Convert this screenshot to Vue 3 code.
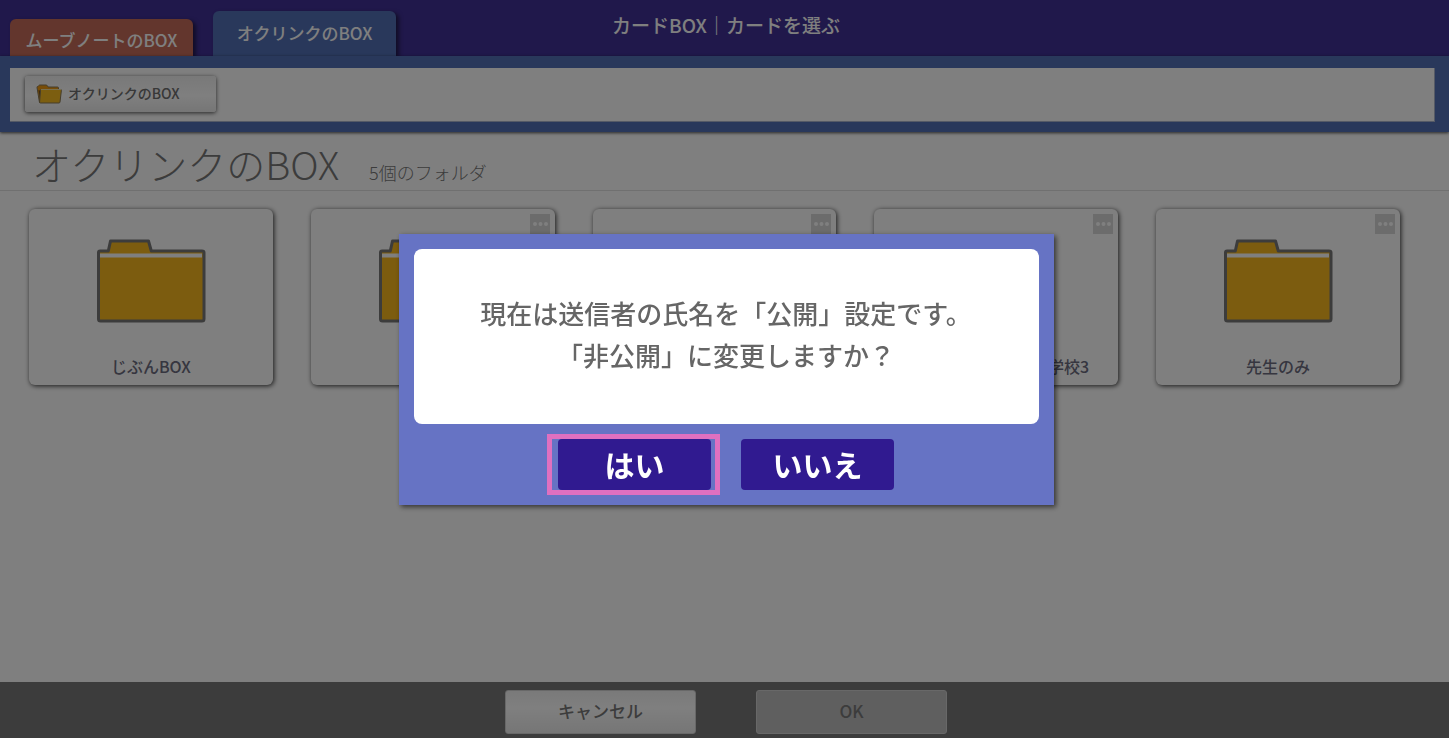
<script setup>
const folders = [
  { id: 1, name: 'じぶんBOX', menu: false },
  { id: 2, name: '', menu: true },
  { id: 3, name: '', menu: true },
  { id: 4, name: '学校3', menu: true, end: true },
  { id: 5, name: '先生のみ', menu: true },
]
</script>

<template>
  <div class="app">
    <header class="topbar">
      <nav class="tabs">
        <button type="button" class="tab move">ムーブノートのBOX</button>
        <button type="button" class="tab oku">オクリンクのBOX</button>
      </nav>
      <h2 class="title">カードBOX｜カードを選ぶ</h2>
    </header>

    <div class="pathbar">
      <div class="path">
        <button type="button" class="crumb">
          <svg width="26" height="20" viewBox="0 0 26 20" aria-hidden="true">
            <path d="M3.5 18.5 1 3.5Q.8 2.5 1.8 2.5L2.500 1.800Q3 1 4 1h6q1 0 1.500 1l.5 1h9.500q1 0 1 1v2L6 7z" fill="#f09a10" stroke="#8a7a58" />
            <path d="M2.500 6 4 16l1-9z" fill="#775018" />
            <path d="M5.200 5.500h19.500q.8 0 .7.900L24 18q-.1 1-1 1H4.500q-1 0-.9-1L4.500 6.200q0-.7.7-.7z" fill="#f8bc20" stroke="#8a7a58" />
            <path d="M5 5.500h20" stroke="#f0e0a0" />
          </svg>
          <span>オクリンクのBOX</span>
        </button>
      </div>
    </div>

    <div class="heading">
      <h1>オクリンクのBOX</h1>
      <p>5個のフォルダ</p>
    </div>

    <main class="grid">
      <article v-for="f in folders" :key="f.id" class="card">
        <button v-if="f.menu" type="button" class="more" aria-label="メニュー">
          <svg width="20" height="20" viewBox="0 0 20 20" aria-hidden="true">
            <circle cx="5" cy="10" r="2" /><circle cx="10.500" cy="10" r="2" /><circle cx="16" cy="10" r="2" />
          </svg>
        </button>
        <svg class="folder" width="110" height="84" viewBox="0 0 110 84" aria-hidden="true">
          <path d="M2.500 12.500q0-1 1-1h8.500l2.500-10h38l2.500 10h51.500q1 0 1 1v68q0 1.500-1.500 1.500h-102q-1.500 0-1.500-1.500z" fill="#f8b81e" />
          <path d="M4 14.500h102v4H4z" fill="#fff" />
          <path d="M2.500 13.500q0-1.500 1.500-1.500h8.300l2.200-10h38l2.800 10H106q2 0 2 1.500V80q0 2-2 2H4.500q-2 0-2-2z" fill="none" stroke="#787878" stroke-width="3" stroke-linejoin="round" />
        </svg>
        <span class="name" :class="{ end: f.end }">{{ f.name }}</span>
      </article>
    </main>

    <footer class="footer">
      <button type="button" class="foot-btn">キャンセル</button>
      <button type="button" class="foot-btn off" disabled>OK</button>
    </footer>

    <div class="backdrop">
      <section class="dialog" role="dialog" aria-modal="true" aria-labelledby="msg">
        <p id="msg" class="message">現在は送信者の氏名を「公開」設定です。<br />「非公開」に変更しますか？</p>
        <div class="actions">
          <div class="focus"><button type="button" class="act">はい</button></div>
          <button type="button" class="act">いいえ</button>
        </div>
      </section>
    </div>
  </div>
</template>

<style>
body {
  margin: 0;
}
</style>

<style scoped>
.app {
  display: flex;
  flex-direction: column;
  min-height: 100vh;
  background: #fff;
  color: #787878;
  font-family: "Noto Sans CJK JP", "Noto Sans", sans-serif;
}
* {
  box-sizing: border-box;
}
h1, h2, p {
  margin: 0;
}
button {
  margin: 0;
  padding: 0;
  border: 0;
  font-family: inherit;
  font-weight: 500;
  color: inherit;
}
.topbar {
  display: grid;
  grid-template-columns: 1fr auto 1fr;
  height: 56px;
  padding-left: 3px;
  background: #403096;
  color: #fff;
}
.tabs {
  display: flex;
  align-items: flex-end;
  gap: 20px;
  padding-left: 7px;
  overflow: hidden;
}
.tab {
  width: 183px;
  border-radius: 6px 6px 0 0;
  font-size: 17px;
  color: #fff;
  box-shadow: 3px 2px 4px rgba(0, 0, 0, 0.5);
}
.move {
  height: 37px;
  padding-top: 4px;
  background: #c66c5a;
}
.oku {
  height: 45px;
  padding-bottom: 2px;
  background: #5270b6;
}
.title {
  font-size: 19px;
  font-weight: 500;
  line-height: 50px;
}
.pathbar {
  position: relative;
  padding: 12px 14px 10px 10px;
  background: #5270b6;
  box-shadow: 0 1px 3px rgba(0, 0, 0, 0.7);
}
.path {
  display: flex;
  padding: 8px 15px 9px;
  border: 1px solid #aab4cc;
  border-width: 0 1px 1px 0;
  background: #fff;
}
.crumb {
  display: flex;
  align-items: center;
  gap: 6px;
  width: 191px;
  height: 36px;
  padding-left: 11px;
  border-radius: 3px;
  background: linear-gradient(#f2f2f2, #fff 55%, #ececec);
  box-shadow: 0 1px 4px rgba(0, 0, 0, 0.7);
  font-size: 14px;
  color: #707070;
}
.crumb span {
  padding-bottom: 2px;
}
.heading {
  display: flex;
  align-items: baseline;
  gap: 30px;
  height: 59px;
  padding-left: 32px;
  border-bottom: 1px solid #e0e0e0;
  font-weight: 300;
}
.heading h1 {
  font-size: 39px;
  font-weight: 300;
  line-height: 62px;
}
.heading p {
  font-size: 18px;
}
.grid {
  flex: 1;
  display: grid;
  grid-template-columns: repeat(5, 1fr);
  align-items: start;
  gap: 38px;
  padding: 18px 49px 18px 29px;
}
.card {
  position: relative;
  display: flex;
  flex-direction: column;
  align-items: center;
  height: 176px;
  padding: 30px 0 7px;
  border-radius: 6px;
  background: #fff;
  box-shadow: 1px 1px 5px rgba(0, 0, 0, 0.8);
}
.more {
  position: absolute;
  top: 5px;
  right: 5px;
  width: 20px;
  height: 20px;
  background: #d8d8d8;
  fill: #fff;
}
.more svg {
  display: block;
}
.name {
  margin-top: auto;
  font-size: 16px;
  font-weight: 500;
  line-height: 24px;
  color: #6c6c80;
}
.end {
  align-self: flex-end;
  padding-right: 29px;
}
.footer {
  display: flex;
  justify-content: center;
  align-items: center;
  gap: 60px;
  height: 56px;
  padding: 4px 0 0 3px;
  background: #787878;
}
.foot-btn {
  width: 191px;
  height: 44px;
  padding-bottom: 3px;
  border: 1px solid #d0d0d0;
  border-radius: 3px;
  background: linear-gradient(#f4f4f4, #fff 40%, #ececec);
  font-size: 17px;
}
.off {
  background: #bebebe;
}
.backdrop {
  position: fixed;
  inset: 0;
  display: flex;
  align-items: center;
  justify-content: center;
  padding-left: 3px;
  background: rgba(0, 0, 0, 0.5);
}
.dialog {
  width: 655px;
  max-width: 100%;
  padding: 15px;
  background: #6673c4;
  box-shadow: 2px 2px 5px rgba(0, 0, 0, 0.6);
}
.message {
  height: 175px;
  padding: 43px 0;
  border-radius: 8px;
  background: #fff;
  color: #666;
  font-size: 26px;
  font-weight: 500;
  line-height: 42px;
  text-align: center;
}
.actions {
  display: flex;
  justify-content: center;
  gap: 30px;
  padding-top: 15px;
}
.act {
  display: block;
  width: 153px;
  height: 51px;
  border-radius: 4px;
  background: #301a90;
  font-size: 30px;
  font-weight: 700;
  line-height: 44px;
  color: #fff;
}
.focus {
  position: relative;
}
.focus::after {
  content: "";
  position: absolute;
  inset: -5px -9px -5px -11px;
  border: 5px solid #df70c0;
}
</style>
